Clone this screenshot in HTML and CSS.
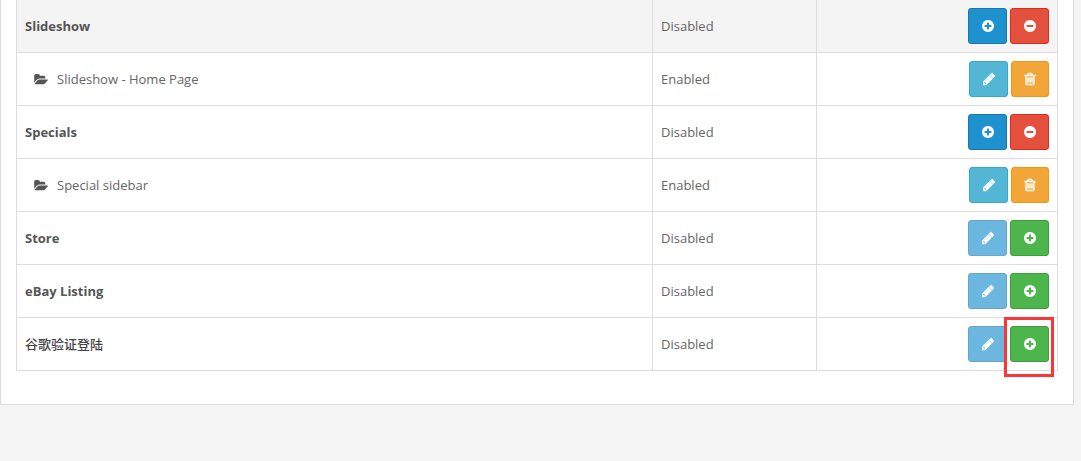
FILE: index.html
```html
<!DOCTYPE html>
<html lang="en">
<head>
  <meta charset="UTF-8">
  <title>Modules</title>
  <meta name="viewport" content="width=device-width, initial-scale=1.0">
  <link rel="stylesheet" href="styles.css">
</head>
<body>
  <svg class="icon-defs" aria-hidden="true">
    <symbol id="plus" viewBox="128 0 1536 1792"><path d="M1344 960v-128q0-26-19-45t-45-19h-256v-256q0-26-19-45t-45-19h-128q-26 0-45 19t-19 45v256h-256q-26 0-45 19t-19 45v128q0 26 19 45t45 19h256v256q0 26 19 45t45 19h128q26 0 45-19t19-45v-256h256q26 0 45-19t19-45zm320-64q0 209-103 385.500t-279.500 279.500-385.500 103-385.500-103-279.500-279.500-103-385.500 103-385.500 279.500-279.500 385.500-103 385.500 103 279.500 279.500 103 385.500z"/></symbol>
    <symbol id="minus" viewBox="128 0 1536 1792"><path d="M1344 960v-128q0-26-19-45t-45-19h-768q-26 0-45 19t-19 45v128q0 26 19 45t45 19h768q26 0 45-19t19-45zm320-64q0 209-103 385.500t-279.500 279.500-385.500 103-385.500-103-279.500-279.500-103-385.500 103-385.500 279.500-279.500 385.500-103 385.500 103 279.500 279.500 103 385.500z"/></symbol>
    <symbol id="pencil" viewBox="128 0 1536 1792"><path stroke="currentColor" stroke-width="50" d="M491 1536l91-91-235-235-91 91v107h128v128h107zm523-928q0-22-22-22-10 0-17 7l-542 542q-7 7-7 17 0 22 22 22 10 0 17-7l542-542q7-7 7-17zm-54-192l416 416-832 832h-416v-416zm683 96q0 53-37 90l-166 166-416-416 166-165q36-38 90-38 53 0 91 38l235 234q37 39 37 91z"/></symbol>
    <symbol id="trash" viewBox="128 0 1536 1792"><path stroke="currentColor" stroke-width="60" d="M704 736v576q0 14-9 23t-23 9h-64q-14 0-23-9t-9-23v-576q0-14 9-23t23-9h64q14 0 23 9t9 23zm256 0v576q0 14-9 23t-23 9h-64q-14 0-23-9t-9-23v-576q0-14 9-23t23-9h64q14 0 23 9t9 23zm256 0v576q0 14-9 23t-23 9h-64q-14 0-23-9t-9-23v-576q0-14 9-23t23-9h64q14 0 23 9t9 23zm128 724v-948h-896v948q0 22 7 40.500t14.500 27 10.500 8.500h832q3 0 10.500-8.500t14.500-27 7-40.500zm-672-1076h448l-48-117q-7-9-17-11h-317q-10 2-17 11zm928 32v64q0 14-9 23t-23 9h-96v948q0 83-47 143.500t-113 60.500h-832q-66 0-113-58.500t-47-141.500v-952h-96q-14 0-23-9t-9-23v-64q0-14 9-23t23-9h309l70-167q15-37 54-63t79-26h320q40 0 79 26t54 63l70 167h309q14 0 23 9t9 23z"/></symbol>
    <symbol id="folder" viewBox="0 0 1879 1792"><path d="M1879 952q0 31-31 66l-336 396q-43 51-120.500 86.500t-143.500 35.500h-1088q-34 0-60.500-13t-26.500-43q0-31 31-66l336-396q43-51 120.500-86.500t143.500-35.500h1088q34 0 60.500 13t26.500 43zm-343-344v160h-832q-94 0-197 47.500t-164 119.500l-337 396-5 6q0-4-.5-12.500t-.5-12.500v-960q0-92 66-158t158-66h320q92 0 158 66t66 158v32h544q92 0 158 66t66 158z"/></symbol>
  </svg>
  <div class="panel">
    <table class="module-table">
      <colgroup>
        <col class="col-name">
        <col class="col-status">
        <col class="col-action">
      </colgroup>
      <tbody>
        <tr class="hovered">
          <td class="name">Slideshow</td>
          <td>Disabled</td>
          <td><div class="actions">
            <button type="button" class="btn primary" aria-label="Add"><svg class="icon"><use href="#plus"/></svg></button>
            <button type="button" class="btn danger" aria-label="Uninstall"><svg class="icon"><use href="#minus"/></svg></button>
          </div></td>
        </tr>
        <tr>
          <td><div class="child"><svg class="icon folder"><use href="#folder"/></svg>Slideshow - Home Page</div></td>
          <td>Enabled</td>
          <td><div class="actions">
            <button type="button" class="btn info" aria-label="Edit"><svg class="icon"><use href="#pencil"/></svg></button>
            <button type="button" class="btn warning" aria-label="Delete"><svg class="icon"><use href="#trash"/></svg></button>
          </div></td>
        </tr>
        <tr>
          <td class="name">Specials</td>
          <td>Disabled</td>
          <td><div class="actions">
            <button type="button" class="btn primary" aria-label="Add"><svg class="icon"><use href="#plus"/></svg></button>
            <button type="button" class="btn danger" aria-label="Uninstall"><svg class="icon"><use href="#minus"/></svg></button>
          </div></td>
        </tr>
        <tr>
          <td><div class="child"><svg class="icon folder"><use href="#folder"/></svg>Special sidebar</div></td>
          <td>Enabled</td>
          <td><div class="actions">
            <button type="button" class="btn info" aria-label="Edit"><svg class="icon"><use href="#pencil"/></svg></button>
            <button type="button" class="btn warning" aria-label="Delete"><svg class="icon"><use href="#trash"/></svg></button>
          </div></td>
        </tr>
        <tr>
          <td class="name">Store</td>
          <td>Disabled</td>
          <td><div class="actions">
            <button type="button" class="btn primary" aria-label="Edit" disabled><svg class="icon"><use href="#pencil"/></svg></button>
            <button type="button" class="btn success" aria-label="Install"><svg class="icon"><use href="#plus"/></svg></button>
          </div></td>
        </tr>
        <tr>
          <td class="name">eBay Listing</td>
          <td>Disabled</td>
          <td><div class="actions">
            <button type="button" class="btn primary" aria-label="Edit" disabled><svg class="icon"><use href="#pencil"/></svg></button>
            <button type="button" class="btn success" aria-label="Install"><svg class="icon"><use href="#plus"/></svg></button>
          </div></td>
        </tr>
        <tr>
          <td class="name zh" lang="zh-CN">谷歌验证登陆</td>
          <td>Disabled</td>
          <td><div class="actions">
            <button type="button" class="btn primary" aria-label="Edit" disabled><svg class="icon"><use href="#pencil"/></svg></button>
            <button type="button" class="btn success marked" aria-label="Install"><svg class="icon"><use href="#plus"/></svg></button>
          </div></td>
        </tr>
      </tbody>
    </table>
  </div>
</body>
</html>
```
FILE: styles.css
```css
body { margin: 0; background: #f5f5f5; color: #666; font: 13px/18px "Open Sans", "Noto Sans CJK SC", sans-serif; }
.icon-defs { display: none; }

.panel { margin-right: 7px; padding: 0 15px 15px; background: #fff; border: 1px solid #dcdcdc; border-top: none; box-shadow: 0 1px 1px rgba(0,0,0,0.05); }

.module-table { width: 100%; margin-bottom: 18px; border-collapse: collapse; table-layout: fixed; }
.col-name { width: auto; }
.col-status { width: 164px; }
.col-action { width: 241px; }
.module-table td { padding: 8px; border: 1px solid #ddd; vertical-align: middle; }
.module-table tr:first-child td { border-top: none; }
.hovered { background: #f4f4f4; }
.name { color: #555; font-weight: 700; }
.zh { font-weight: 500; color: #444; }
.child { display: flex; align-items: center; gap: 9px; padding-left: 9px; }

.actions { display: flex; justify-content: flex-end; gap: 3px; }
.btn { position: relative; display: flex; align-items: center; justify-content: center; width: 39px; height: 36px; padding: 0; border: 1px solid; border-radius: 3px; color: #fff; cursor: pointer; }
.btn.primary { background: #1e91cf; border-color: #1978ab; }
.btn.danger { background: #e3503e; border-color: #dc2f1b; }
.btn.info { background: #54b6d5; border-color: #35a8cc; }
.btn.warning { width: 38px; background: #f3a638; border-color: #ef9613; }
.btn.success { background: #4cb64c; border-color: #409c40; }
.btn:disabled { opacity: 0.65; cursor: not-allowed; }

.icon { width: 12px; height: 14px; fill: currentColor; }
.folder { width: 14px; height: 13px; color: #555; }

/* red frame around the install button */
.marked::after { content: ""; position: absolute; top: -10px; right: -6px; bottom: -16px; left: -7px; border: 3px solid #fb3539; }
```
